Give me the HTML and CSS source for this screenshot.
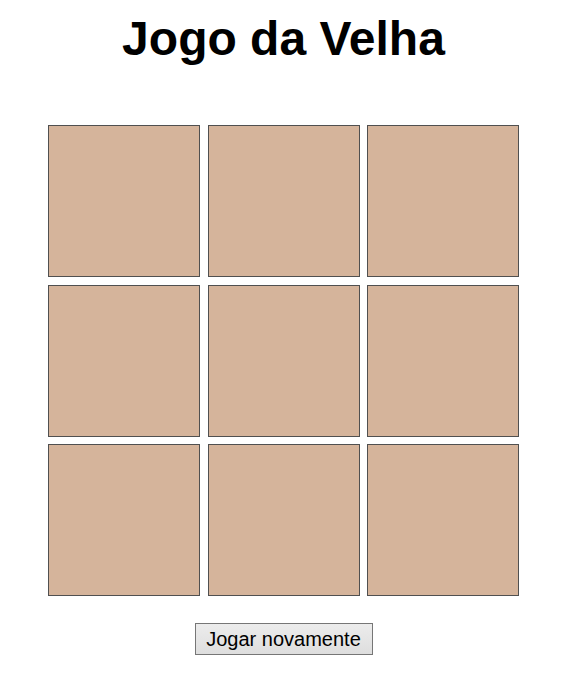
FILE: index.html
```html
<!DOCTYPE html>
<html lang="pt">
<head>
<meta charset="utf-8">
<title>Jogo da Velha</title>
<link rel="stylesheet" href="styles.css">
</head>
<body>
<main class="page">
  <h1 class="title">Jogo da Velha</h1>
  <div class="board">
    <div class="cell"></div>
    <div class="cell"></div>
    <div class="cell"></div>
    <div class="cell"></div>
    <div class="cell"></div>
    <div class="cell"></div>
    <div class="cell"></div>
    <div class="cell"></div>
    <div class="cell"></div>
  </div>
  <button class="restart" type="button">Jogar novamente</button>
</main>
</body>
</html>
```

FILE: styles.css
```css
html, body {
  margin: 0;
  padding: 0;
  background: #ffffff;
}

.page {
  width: 567px;
  display: flex;
  flex-direction: column;
  align-items: center;
  font-family: "Liberation Sans", Arial, sans-serif;
  padding-top: 11px;
}

.title {
  margin: 0;
  font-size: 48px;
  font-weight: bold;
  line-height: 55px;
  color: #000;
}

.board {
  margin-top: 59px;
  display: grid;
  grid-template-columns: repeat(3, 152px);
  grid-auto-rows: 152px;
  gap: 7.5px;
}

.cell {
  box-sizing: border-box;
  background: #d5b49b;
  border: 1px solid #505050;
}

.restart {
  margin-top: 27px;
  box-sizing: border-box;
  width: 178px;
  height: 32px;
  padding: 0;
  font-family: "Liberation Sans", Arial, sans-serif;
  font-size: 20px;
  color: #000;
  background: linear-gradient(#ececec, #dedede);
  border: 1px solid #767676;
  border-radius: 0;
}
```
